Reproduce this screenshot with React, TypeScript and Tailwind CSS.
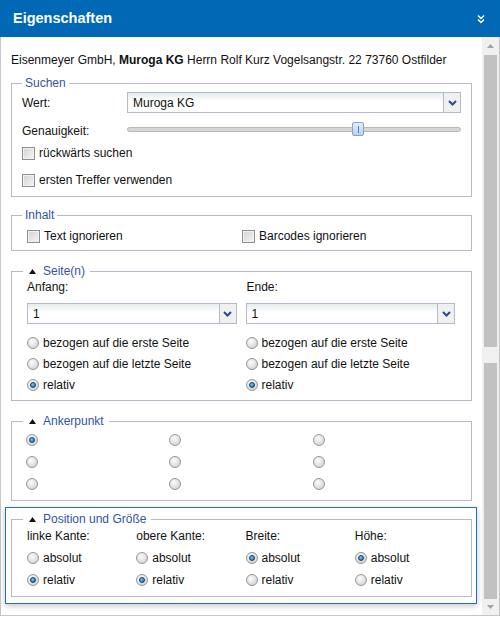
import React from 'react';

const LEGEND_COLOR = 'text-[#3353a3]';

const Chevron: React.FC = () => (
  <svg width="9" height="6" viewBox="0 0 9 6">
    <path d="M1 1 L4.5 4.5 L8 1" fill="none" stroke="#2b4b8c" strokeWidth="2" />
  </svg>
);

const Select: React.FC<{ value: string; className?: string }> = ({ value, className = '' }) => (
  <div className={`flex h-[21px] border border-[#b5b9c9] bg-[linear-gradient(#e6ecee,#ffffff_45%)] ${className}`}>
    <div className="flex-1 flex items-center pl-[5px] text-[#111]">{value}</div>
    <div className="w-[17px] flex items-center justify-center border-l border-[#b5b9c9] bg-[#f0f0f0]">
      <Chevron />
    </div>
  </div>
);

const Checkbox: React.FC<{ label: string; className?: string }> = ({ label, className = '' }) => (
  <div className={`flex items-center gap-[4px] ${className}`}>
    <span className="w-[13px] h-[13px] border border-[#8e8e8e] bg-linear-to-br from-[#d2d2d2] to-[#f6f6f6] shadow-[inset_0_0_0_1px_#f2f2f2]" />
    <span>{label}</span>
  </div>
);

const Radio: React.FC<{ checked?: boolean; label?: string }> = ({ checked, label }) => (
  <div className="flex items-center gap-[4px]">
    <span className="w-[12px] h-[12px] rounded-full border border-[#979797] bg-[radial-gradient(circle_at_40%_35%,#fdfdfd,#c9c9c9)] flex items-center justify-center">
      {checked && (
        <span className="w-[6px] h-[6px] rounded-full border border-[#163e63] bg-[radial-gradient(circle_at_40%_35%,#7cc8f4,#0b62a8)]" />
      )}
    </span>
    {label && <span>{label}</span>}
  </div>
);

const Legend: React.FC<{ title: string; arrow?: boolean }> = ({ title, arrow }) =>
  arrow ? (
    <legend className={`ml-[11px] pl-[6px] pr-[5px] leading-[14px] flex items-center gap-[7px] ${LEGEND_COLOR}`}>
      <svg width="7" height="5" viewBox="0 0 7 5">
        <path d="M3.5 0 L7 5 L0 5 Z" fill="#111" />
      </svg>
      <span>{title}</span>
    </legend>
  ) : (
    <legend className={`ml-[10px] px-[3px] leading-[14px] ${LEGEND_COLOR}`}>{title}</legend>
  );

const Slider: React.FC = () => (
  <div className="relative flex-1 h-[14px] flex items-center">
    <div className="w-full h-[5px] rounded-full border border-[#b9b9b9] bg-[#d8d6d2]" />
    <div className="absolute left-[225px] top-0 w-[12px] h-[14px] rounded-[2px] border border-[#7fa4d8] bg-linear-to-b from-[#e4eefc] to-[#b9d1f2] flex justify-center">
      <span className="mt-[3px] w-px h-[7px] bg-[#5b83c0]" />
    </div>
  </div>
);

export default function App() {
  return (
    <div className="w-[500px] h-[618px] bg-white font-['Liberation_Sans',Arial,sans-serif] text-[12px] text-[#111] overflow-hidden">
      <div className="h-[37px] bg-[#0068b4] flex items-center justify-between pl-[13px] pr-[15px]">
        <span className="text-white font-bold text-[14.5px]">Eigenschaften</span>
        <svg width="8" height="10" viewBox="0 0 8 10">
          <path d="M1 1.5 L4 4.5 L7 1.5 M1 5.5 L4 8.5 L7 5.5" fill="none" stroke="#fff" strokeWidth="1.5" />
        </svg>
      </div>

      <div className="h-[579px] flex border-x border-b border-[#c6c6c6]">
        <div className="w-[481px] flex flex-col pt-[15px]">
          <div className="ml-[10px] leading-[16px] h-[16px]">
            Eisenmeyer GmbH, <b>Muroga KG</b> Herrn Rolf Kurz Vogelsangstr. 22 73760 Ostfilder
          </div>

          {/* Suchen */}
          <fieldset className="mt-[8px] ml-[10px] w-[461px] border border-[#b9b9c9] pb-[7px]">
            <Legend title="Suchen" />
            <div className="px-[10px]">
              <div className="mt-[2px] h-[21px] flex items-center">
                <span className="w-[105px]">Wert:</span>
                <Select value="Muroga KG" className="flex-1" />
              </div>
              <div className="mt-[5px] h-[22px] flex items-center">
                <span className="w-[105px] pt-[3px]">Genauigkeit:</span>
                <Slider />
              </div>
              <Checkbox className="mt-[4px] h-[18px]" label="rückwärts suchen" />
              <Checkbox className="mt-[9px] h-[18px]" label="ersten Treffer verwenden" />
            </div>
          </fieldset>

          {/* Inhalt */}
          <fieldset className="mt-[11px] ml-[10px] w-[461px] border border-[#b9b9c9] pb-[5px]">
            <Legend title="Inhalt" />
            <div className="pl-[15px] mt-[5px] h-[18px] flex items-center">
              <Checkbox className="w-[215px]" label="Text ignorieren" />
              <Checkbox label="Barcodes ignorieren" />
            </div>
          </fieldset>

          {/* Seite(n) */}
          <fieldset className="mt-[13px] ml-[10px] w-[461px] border border-[#b9b9c9] pb-[5px]">
            <Legend title="Seite(n)" arrow />
            <div className="pl-[15px] pr-[16px] grid grid-cols-2 gap-x-[9px]">
              {['Anfang:', 'Ende:'].map((l, i) => (
                <div key={l} className="flex flex-col">
                  <div className={`mt-[1px] h-[16px] flex items-center ${i === 1 ? 'pl-px' : ''}`}>{l}</div>
                  <Select value="1" className="mt-[8px]" />
                  <div className="mt-[8px] h-[21px] flex items-center"><Radio label="bezogen auf die erste Seite" /></div>
                  <div className="h-[21px] flex items-center"><Radio label="bezogen auf die letzte Seite" /></div>
                  <div className="h-[21px] flex items-center"><Radio checked label="relativ" /></div>
                </div>
              ))}
            </div>
          </fieldset>

          {/* Ankerpunkt */}
          <fieldset className="mt-[13px] ml-[10px] w-[461px] border border-[#b9b9c9] pb-[5px]">
            <Legend title="Ankerpunkt" arrow />
            <div className="pl-[14px] pr-[15px] mt-[1px] grid grid-cols-3">
              {Array.from({ length: 9 }).map((_, i) => (
                <div key={i} className="h-[22px] flex items-center">
                  <Radio checked={i === 0} />
                </div>
              ))}
            </div>
          </fieldset>

          {/* Position und Größe */}
          <div className="mt-[6px] ml-[4px] w-[472px] border border-[#1a73c4] pl-[5px] pr-[4px] pt-[4px] pb-[6px] shadow-[0_2px_6px_rgba(0,0,0,0.22)]">
            <fieldset className="w-[461px] border border-[#b9b9c9] pb-[5px]">
              <Legend title="Position und Größe" arrow />
              <div className="pl-[15px] pr-[7px] grid grid-cols-4">
                {[
                  { t: 'linke Kante:', abs: false },
                  { t: 'obere Kante:', abs: false },
                  { t: 'Breite:', abs: true },
                  { t: 'Höhe:', abs: true },
                ].map((c) => (
                  <div key={c.t} className="flex flex-col">
                    <div className="mt-[2px] h-[16px] flex items-center">{c.t}</div>
                    <div className="mt-[3px] h-[22px] flex items-center"><Radio checked={c.abs} label="absolut" /></div>
                    <div className="h-[22px] flex items-center"><Radio checked={!c.abs} label="relativ" /></div>
                  </div>
                ))}
              </div>
            </fieldset>
          </div>
        </div>

        {/* scrollbar */}
        <div className="w-[17px] flex flex-col bg-[#f0f0f0]">
          <div className="h-[18px] flex items-center justify-center">
            <svg width="7" height="4" viewBox="0 0 7 4"><path d="M3.5 0 L7 4 L0 4 Z" fill="#a3a3a3" /></svg>
          </div>
          <div className="h-[292px] mx-[2px] bg-[#c1c1c1]" />
          <div className="h-[16px]" />
          <div className="flex-1 mx-[2px] bg-[#c1c1c1]" />
          <div className="h-[16px] flex items-center justify-center">
            <svg width="7" height="4" viewBox="0 0 7 4"><path d="M0 0 L7 0 L3.5 4 Z" fill="#a3a3a3" /></svg>
          </div>
        </div>
      </div>
    </div>
  );
}
